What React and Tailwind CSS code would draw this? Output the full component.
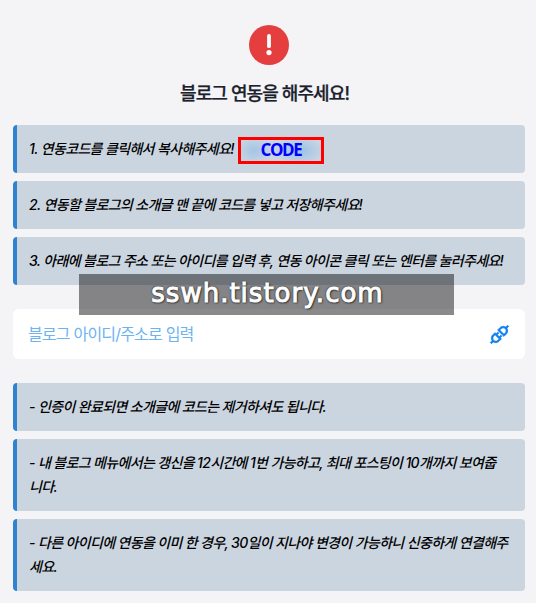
import { AiOutlineApi } from "react-icons/ai";

const steps = [
  { text: "1. 연동코드를 클릭해서 복사해주세요!", code: "CODE" },
  { text: "2. 연동할 블로그의 소개글 맨 끝에 코드를 넣고 저장해주세요!" },
  {
    text: "3. 아래에 블로그 주소 또는 아이디를 입력 후, 연동 아이콘 클릭 또는 엔터를 눌러주세요!",
  },
];

const notes = [
  { text: "- 인증이 완료되면 소개글에 코드는 제거하셔도 됩니다." },
  {
    text: "- 내 블로그 메뉴에서는 갱신을 12시간에 1번 가능하고, 최대 포스팅이 10개까지 보여줍\n니다.",
  },
  {
    text: "- 다른 아이디에 연동을 이미 한 경우, 30일이 지나야 변경이 가능하니 신중하게 연결해주\n세요.",
  },
];

function Notice({ text, code }) {
  return (
    <li className="flex rounded border-l-4 border-[#3182ce] bg-[#cbd5e0] py-3 pr-3 pl-3 text-sm leading-6 font-medium text-black">
      <p className="tracking-[-0.65px] whitespace-pre italic">{text}</p>
      {code && (
        <button className="-mb-[3px] ml-[4px] flex h-[27px] w-[86px] shrink-0 items-center justify-center border-[3px] border-[#ff0000] bg-[radial-gradient(ellipse_18px_14px_at_13px_50%,#a3c5e7_0,#a3c5e700_100%),radial-gradient(ellipse_26px_14px_at_58px_50%,#98c1ea_0,#98c1ea00_100%)] pb-[3px] font-['Open_Sans',sans-serif] text-[17px] leading-none font-bold tracking-[-1.4px] text-[#0000ff]">
          {code}
        </button>
      )}
    </li>
  );
}

export default function App() {
  return (
    <div className="relative h-[603px] w-[536px] overflow-hidden bg-[#f4f4f7] pt-[25px] pr-[11px] pl-[13px] font-[Inter,'Noto_Sans_CJK_KR',sans-serif]">
      {/* Título */}
      <div className="flex h-[100px] flex-col items-center">
        <svg viewBox="0 0 40 40" className="h-10 w-10">
          <circle cx="20" cy="20" r="20" fill="#e53e3e" />
          <path
            d="M20 11v10.2"
            stroke="#fff"
            strokeWidth="3.8"
            strokeLinecap="round"
          />
          <circle cx="20" cy="27.6" r="2.6" fill="#fff" />
        </svg>
        <h1 className="mt-[17px] mr-[9px] text-lg leading-6 font-medium tracking-[-0.9px] text-[#1a202c] [-webkit-text-stroke:0.25px_#1a202c]">
          블로그 연동을 해주세요!
        </h1>
      </div>

      <ul className="flex flex-col gap-2">
        {steps.map((item) => (
          <Notice key={item.text} {...item} />
        ))}
      </ul>

      {/* Campo do blog */}
      <div className="my-6 flex h-[50px] items-center rounded-md bg-white pr-3.5 pl-[15px]">
        <input
          placeholder="블로그 아이디/주소로 입력"
          className="min-w-0 flex-1 text-base font-normal tracking-[-0.8px] outline-none placeholder:text-[#6cb3f2]"
        />
        <AiOutlineApi className="h-[23px] w-[23px] stroke-[#0a80f0] stroke-[34px] text-[#0a80f0]" />
      </div>

      <ul className="flex flex-col gap-2">
        {notes.map((item) => (
          <Notice key={item.text} {...item} />
        ))}
      </ul>

      {/* Marca d'água */}
      <div className="absolute top-[274px] left-[79px] flex h-[41px] w-[375px] items-center justify-center bg-black/46">
        <span className="-mt-[3px] ml-[2px] font-['DejaVu_Sans',sans-serif] text-[26px] leading-none tracking-[1px] whitespace-nowrap text-white [-webkit-text-stroke:1px_white] [text-shadow:0_0_2px_#222,0_0_2px_#222,1px_1px_2px_#222]">
          sswh.tistory.com
        </span>
      </div>
    </div>
  );
}
